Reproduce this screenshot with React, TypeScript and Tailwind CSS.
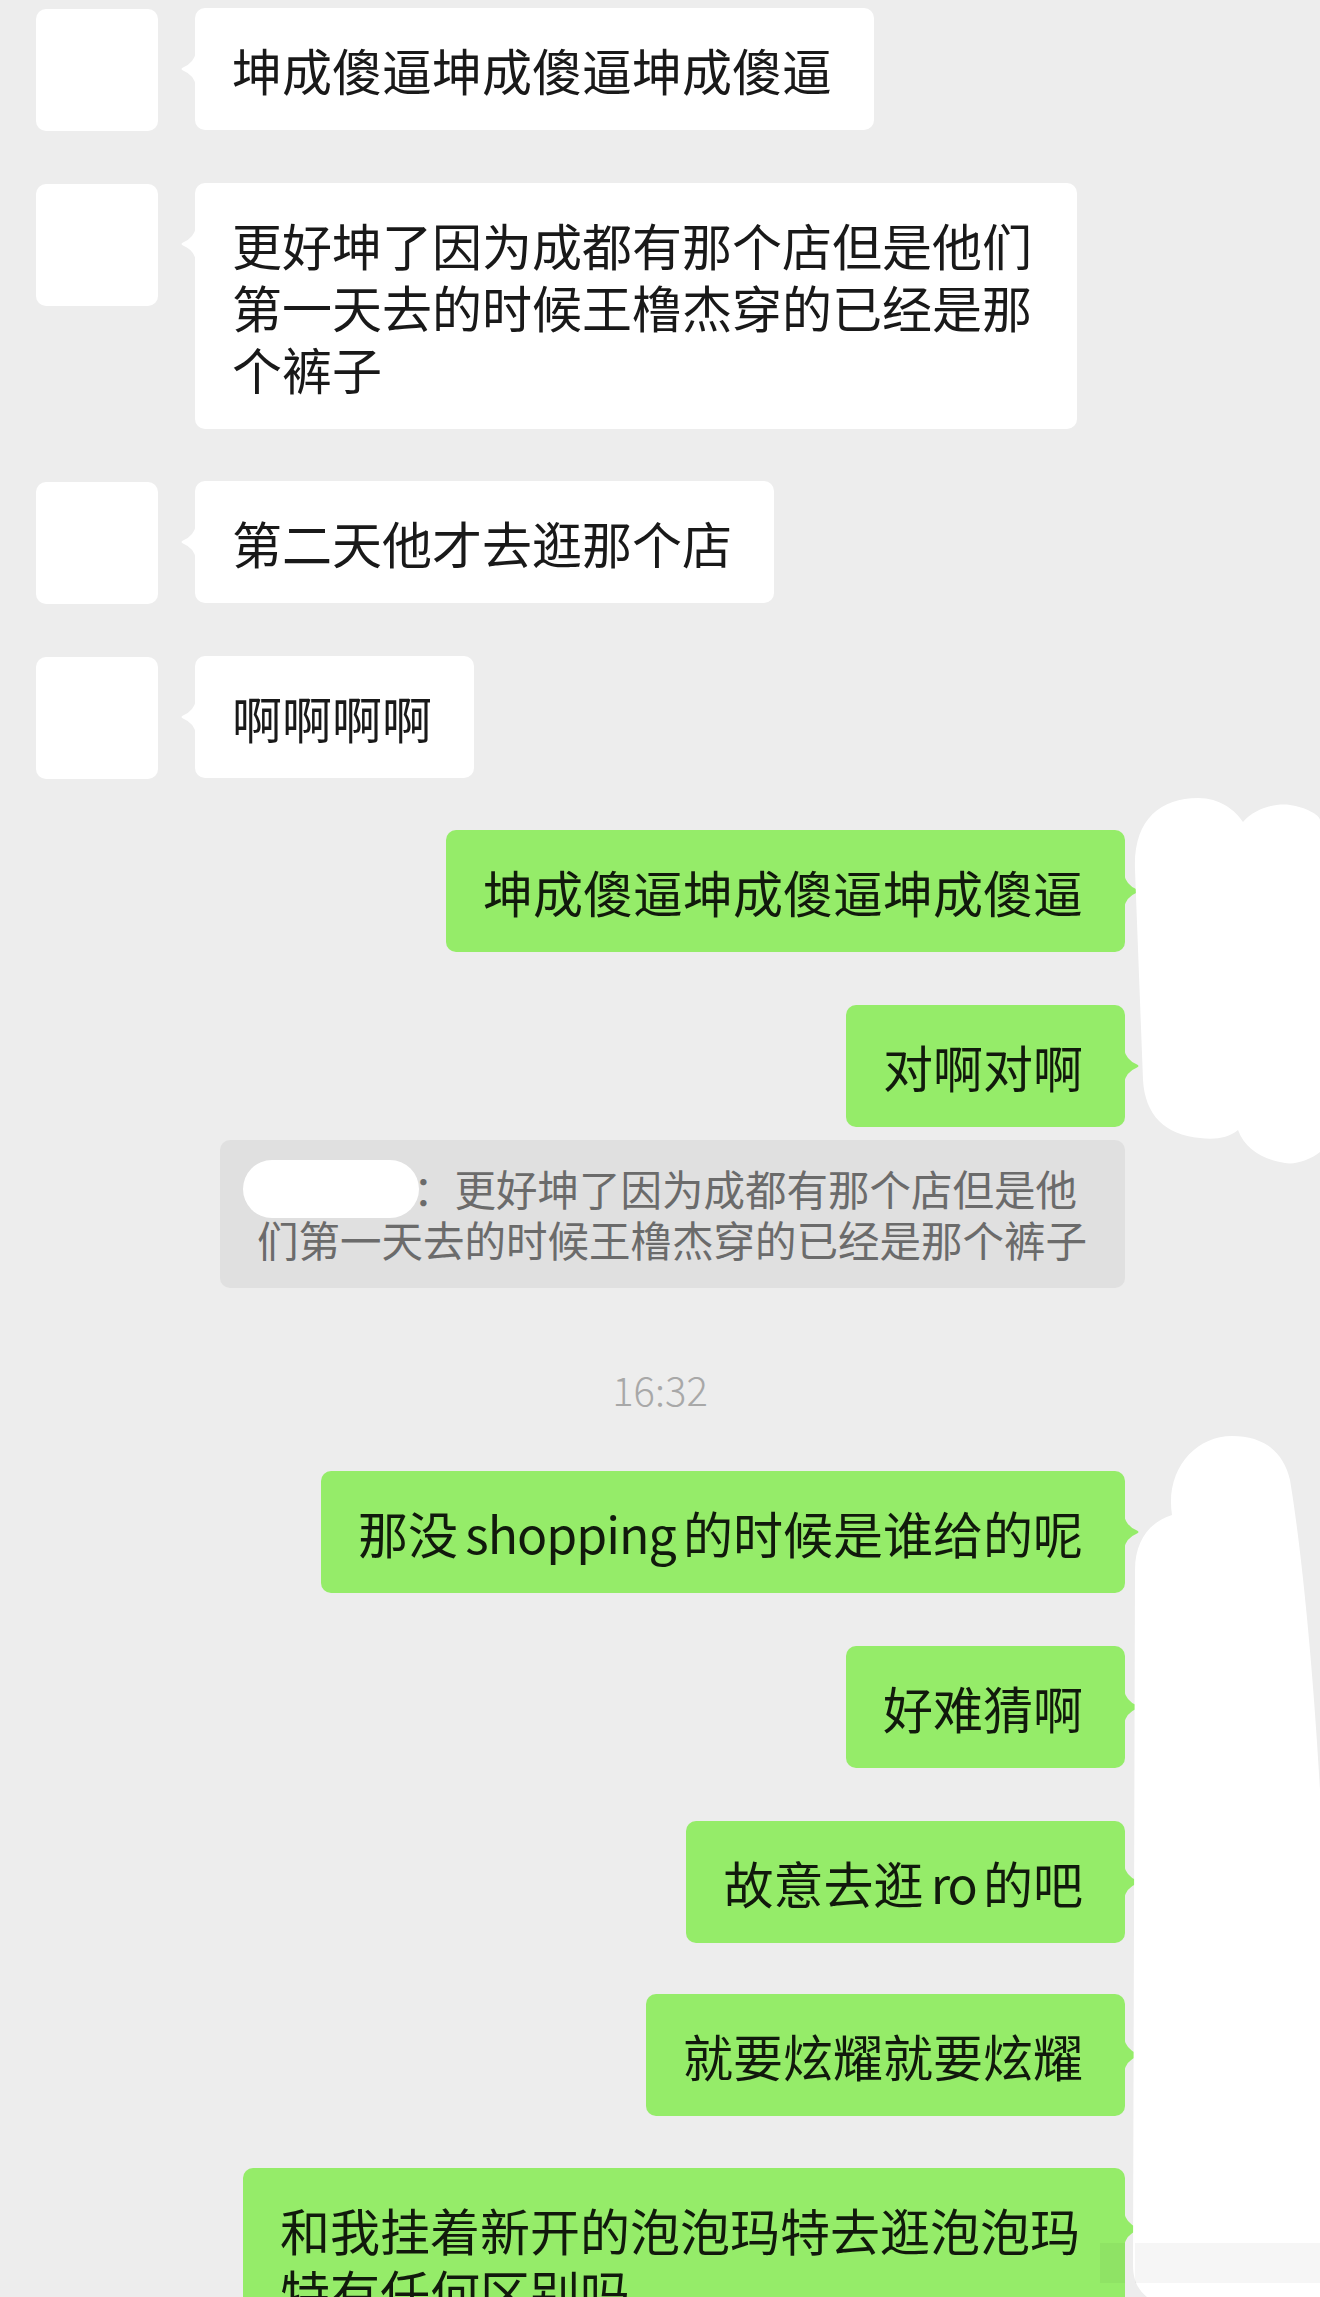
import React from "react";

type Msg = { side: "l" | "r"; text: React.ReactNode; mt: string };

const font = { fontFamily: '"Noto Sans CJK SC", "Noto Sans", sans-serif' };

function LeftTail() {
  return (
    <svg
      className="absolute -left-[15px] top-[43px]"
      width="16"
      height="36"
      viewBox="0 0 16 36"
    >
      <path d="M16 1 Q14 12 3 16.5 Q0 18 3 19.5 Q14 24 16 35 Z" fill="#ffffff" />
    </svg>
  );
}

function RightTail() {
  return (
    <svg
      className="absolute -right-[15px] top-[43px]"
      width="16"
      height="36"
      viewBox="0 0 16 36"
    >
      <path d="M0 1 Q2 12 13 16.5 Q16 18 13 19.5 Q2 24 0 35 Z" fill="#95ec69" />
    </svg>
  );
}

function Row({ m }: { m: Msg }) {
  if (m.side === "l") {
    return (
      <div className={`flex items-start pl-[36px] ${m.mt}`}>
        <div className="mt-[1px] h-[122px] w-[122px] shrink-0 rounded-[10px] bg-white" />
        <div className="relative ml-[37px] max-w-[882px] rounded-[10px] bg-white py-[30px] pl-[37px] pr-[42px] text-[50px] leading-[62px] text-[#191919]">
          <LeftTail />
          {m.text}
        </div>
      </div>
    );
  }
  return (
    <div className={`flex items-start justify-end pr-[195px] ${m.mt}`}>
      <div className="relative max-w-[882px] rounded-[10px] bg-[#95ec69] py-[30px] pl-[37px] pr-[42px] text-[50px] leading-[62px] text-[#111a0c] [word-spacing:-4px]">
        <RightTail />
        {m.text}
      </div>
    </div>
  );
}

const before: Msg[] = [
  { side: "l", text: "坤成傻逼坤成傻逼坤成傻逼", mt: "mt-0" },
  { side: "l", text: "更好坤了因为成都有那个店但是他们第一天去的时候王橹杰穿的已经是那个裤子", mt: "mt-[52px]" },
  { side: "l", text: "第二天他才去逛那个店", mt: "mt-[52px]" },
  { side: "l", text: "啊啊啊啊", mt: "mt-[52px]" },
  { side: "r", text: "坤成傻逼坤成傻逼坤成傻逼", mt: "mt-[51px]" },
  { side: "r", text: "对啊对啊", mt: "mt-[53px]" },
];

const after: Msg[] = [
  {
    side: "r",
    text: (
      <>
        那没 <span className="tracking-[-1px]">shopping</span> 的时候是谁给的呢
      </>
    ),
    mt: "mt-[58px]",
  },
  { side: "r", text: "好难猜啊", mt: "mt-[53px]" },
  {
    side: "r",
    text: (
      <>
        故意去逛 <span className="tracking-[-2px]">ro</span> 的吧
      </>
    ),
    mt: "mt-[53px]",
  },
  { side: "r", text: "就要炫耀就要炫耀", mt: "mt-[51px]" },
  { side: "r", text: "和我挂着新开的泡泡玛特去逛泡泡玛特有任何区别吗", mt: "mt-[52px]" },
];

export default function App() {
  return (
    <div
      className="relative h-[2297px] w-[1320px] overflow-hidden bg-[#ededed] pt-[8px]"
      style={font}
    >
      {before.map((m, i) => (
        <Row key={"b" + i} m={m} />
      ))}

      {/* quoted reply */}
      <div className="mt-[13px] flex justify-end pr-[195px]">
        <div className="w-[905px] rounded-[10px] bg-[#e0e0e0] py-[23px] pl-[37px] pr-[28px] text-[41.5px] leading-[51px] text-[#6b6b6b]">
          <span className="relative inline-block h-[51px] w-[156px] align-top">
            <span className="absolute -left-[14px] -top-[3px] h-[58px] w-[176px] rounded-[30px] bg-white" />
          </span>
          ：更好坤了因为成都有那个店但是他们第一天去的时候王橹杰穿的已经是那个裤子
        </div>
      </div>

      <div className="mt-[77px] text-center text-[40px] font-light leading-[48px] text-[#a8a8a8]">
        16:32
      </div>

      {after.map((m, i) => (
        <Row key={"a" + i} m={m} />
      ))}

      {/* white cover marks over the right avatars */}
      <svg
        className="absolute left-0 top-0"
        width="1320"
        height="2297"
        viewBox="0 0 1320 2297"
      >
        <path
          d="M1135 870 C1133 820 1160 798 1198 798 C1220 798 1235 810 1243 822 C1255 808 1275 803 1290 805 C1305 807 1320 815 1320 820 L1320 1152 C1310 1160 1295 1165 1285 1163 C1265 1160 1245 1150 1238 1130 C1228 1138 1215 1140 1200 1138 C1165 1135 1145 1115 1143 1080 Z"
          fill="#ffffff"
        />
        <path
          d="M1135 1570 C1135 1540 1150 1522 1172 1515 C1165 1470 1195 1436 1232 1436 C1262 1436 1283 1450 1290 1480 C1300 1540 1312 1650 1320 1790 L1320 2297 L1147 2297 C1138 2290 1133 2280 1133 2265 Z"
          fill="#ffffff"
        />
        <g fill="#000000" opacity="0.03">
          <rect x="1100" y="2243" width="25" height="40" />
          <rect x="1135" y="2243" width="185" height="40" />
          <rect x="1172" y="2243" width="10" height="40" />
          <rect x="1205" y="2243" width="8" height="40" />
          <rect x="1238" y="2243" width="10" height="40" />
          <rect x="1268" y="2243" width="9" height="40" />
        </g>
      </svg>
    </div>
  );
}
